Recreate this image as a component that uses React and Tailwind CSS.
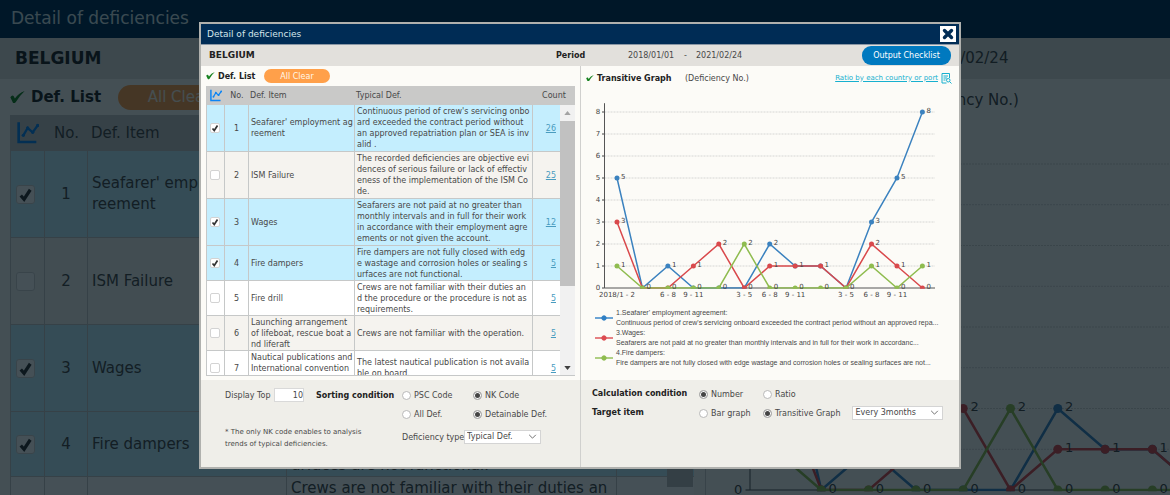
import React, { useState } from "react";
import clsx from "clsx";

const DEFICIENCIES = [
  { no: 1, item: "Seafarer' employment ag\nreement", typical: "Continuous period of crew's servicing onbo\nard exceeded the contract period without\nan approved repatriation plan or SEA is inv\nalid .", count: 26, tall: true },
  { no: 2, item: "ISM Failure", typical: "The recorded deficiencies are objective evi\ndences of serious failure or lack of effectiv\neness of the implementation of the ISM Co\nde.", count: 25, tall: true },
  { no: 3, item: "Wages", typical: "Seafarers are not paid at no greater than\nmonthly intervals and in full for their work\nin accordance with their employment agre\nements or not given the account.", count: 12, tall: true },
  { no: 4, item: "Fire dampers", typical: "Fire dampers are not fully closed with edg\ne wastage and corrosion holes or sealing s\nurfaces are not functional.", count: 5 },
  { no: 5, item: "Fire drill", typical: "Crews are not familiar with their duties an\nd the procedure or the procedure is not as\nrequirements.", count: 5 },
  { no: 6, item: "Launching arrangement\nof lifeboat, rescue boat a\nnd liferaft", typical: "Crews are not familiar with the operation.", count: 5 },
  { no: 7, item: "Nautical publications and\nInternational convention\ns", typical: "The latest nautical publication is not availa\nble on board.", count: 5 },
];

const SERIES = [
  { color: "#3b82bf", values: [5, 0, 1, 0, 0, 0, 2, 1, 1, 0, 3, 5, 8] },
  { color: "#d9494c", values: [3, 0, 0, 1, 2, 0, 1, 1, 1, 0, 2, 1, 0] },
  { color: "#8fbc4f", values: [1, 0, 0, 0, 0, 2, 0, 0, 0, 0, 1, 0, 1] },
];

const X_LABELS = { 0: "2018/1 - 2", 2: "6 - 8", 3: "9 - 11", 5: "3 - 5", 6: "6 - 8", 7: "9 - 11", 9: "3 - 5", 10: "6 - 8", 11: "9 - 11" };

const LEGEND = [
  { title: "1.Seafarer' employment agreement:", text: "Continuous period of crew's servicing onboard exceeded the contract period without an approved repa...", color: "#2f7fc4" },
  { title: "3.Wages:", text: "Seafarers are not paid at no greater than monthly intervals and in full for their work in accordanc...", color: "#dc4b50" },
  { title: "4.Fire dampers:", text: "Fire dampers are not fully closed with edge wastage and corrosion holes or sealing surfaces are not...", color: "#8fbc4f" },
];

// the dialog itself and the enlarged copy behind it
const SMALL = {
  text: "text-[8px] leading-[11px]",
  head: "h-[19px]",
  tall: "h-[47px]",
  short: "h-[35px]",
  cols: ["w-[18px]", "w-[24px]", "w-[106px]", "w-[178px]", "w-[42px]"],
  icon: "w-[12px] h-[13px]",
  box: "w-[10px] h-[10px] rounded-[2px]",
  boxPad: "pr-[1px]",
  pad: "px-[2px]",
  headPad: "px-[1px]",
  countPad: "pr-[19px]",
};
const LARGE = {
  text: "text-[15px] leading-[21px]",
  head: "h-[36px]",
  tall: "h-[87px]",
  short: "h-[65px]",
  cols: ["w-[34px]", "w-[43px]", "w-[199px]", "w-[330px]", "w-[77px]"],
  icon: "w-[22px] h-[22px]",
  box: "w-[19px] h-[19px] rounded-[3px]",
  boxPad: "pr-[4px]",
  pad: "px-[4px]",
  headPad: "px-[3px]",
  countPad: "pr-[35px]",
};

const GraphIcon = ({ className }) => (
  <svg viewBox="0 0 66 66" className={className} fill="none" stroke="#0b84f5" strokeWidth="8">
    <path d="M5 1V60H58" />
    <path d="M19 40L32 18L47 31L63 9" strokeWidth="7" />
    <g fill="#0b84f5" stroke="none">
      <circle cx="19" cy="40" r="5" />
      <circle cx="32" cy="18" r="5" />
      <circle cx="47" cy="31" r="5" />
      <circle cx="62" cy="10" r="5" />
    </g>
  </svg>
);

const GreenCheck = ({ className }) => (
  <svg viewBox="0 0 46 38" className={className} fill="#16811f">
    <path d="M1 19Q6 12 11 15L15 23Q26 7 45 0Q28 16 18 34Q13 40 9 36Z" />
  </svg>
);

const TickBox = ({ label, checked, onChange, size }) => (
  <span className={clsx("relative mx-auto block", size)}>
    <input
      type="checkbox"
      aria-label={label}
      checked={checked}
      onChange={onChange}
      className="peer block h-full w-full appearance-none rounded-[inherit] border border-[#d3d3d3] bg-white"
    />
    <svg viewBox="0 0 20 20" className="pointer-events-none absolute inset-0 hidden h-full w-full peer-checked:block" fill="none" stroke="#333" strokeWidth="3.4">
      <path d="M5 11L8.500 15L15 5" />
    </svg>
  </span>
);

const Radio = ({ name, label, checked, className }) => (
  <label className={clsx("flex items-center gap-[3px]", className)}>
    <input
      type="radio"
      name={name}
      defaultChecked={checked}
      className="h-[9px] w-[9px] shrink-0 appearance-none rounded-full border border-[#b9b9b9] bg-white checked:bg-[#444] checked:shadow-[inset_0_0_0_1px_white]"
    />
    {label}
  </label>
);

const Dropdown = ({ id, value, className }) => (
  <span className={clsx("relative block h-[14px]", className)}>
    <select id={id} aria-label={id} className="block h-full w-full appearance-none border border-[#d4d4d4] bg-white pl-[2px] text-[8px] leading-[12px]">
      <option>{value}</option>
    </select>
    <svg viewBox="0 0 10 6" className="pointer-events-none absolute top-[4px] right-[4px] h-[5px] w-[9px]" fill="none" stroke="#555">
      <path d="M1 1L5 5L9 1" />
    </svg>
  </span>
);

function DefTable({ s, rows, selected, toggle }) {
  const cell = "border-r border-b border-[#c6c8c8]";
  return (
    <table className={clsx("w-full table-fixed border-separate border-spacing-0 text-left text-[#484848]", s.text)}>
      <thead className="bg-[#c9c9c8]">
        <tr className={s.head}>
          <th className={clsx("p-0", s.cols[0])}><GraphIcon className={clsx("mx-auto block", s.icon)} /></th>
          <th className={clsx("p-0 text-center font-normal", s.cols[1])}>No.</th>
          <th className={clsx("font-normal", s.cols[2], s.headPad)}>Def. Item</th>
          <th className={clsx("font-normal", s.cols[3], s.headPad)}>Typical Def.</th>
          <th className={clsx("p-0 text-center font-normal", s.cols[4])}>Count</th>
        </tr>
      </thead>
      <tbody>
        {rows.map((d, i) => (
          <tr
            key={d.no}
            className={clsx(d.tall ? s.tall : s.short, selected.includes(d.no) ? "bg-[#c4eefe]" : i % 2 ? "bg-[#f5f3ef]" : "bg-white")}
          >
            <td className={clsx(cell, s.boxPad)}>
              <TickBox label={`Select ${d.item}`} checked={selected.includes(d.no)} onChange={() => toggle(d.no)} size={s.box} />
            </td>
            <td className={clsx(cell, "text-center")}>{d.no}</td>
            <td className={clsx(cell, "whitespace-pre", s.pad)}>{d.item}</td>
            <td className={clsx(cell, "whitespace-pre", s.pad)}>{d.typical}</td>
            <td className={clsx("border-b border-[#c6c8c8] text-right", s.countPad)}>
              <a href="#count" className="text-[#4a9cbf] underline">{d.count}</a>
            </td>
          </tr>
        ))}
      </tbody>
    </table>
  );
}

// x0: axis, x1: first point, step: gap between points, base: y of zero, unit: height of 1
function Chart({ x0, x1, step, base, unit, end, font, dot, stroke, className, ...rest }) {
  const px = (i) => x1 + i * step;
  const py = (v) => base - v * unit;
  const labels = new Set(SERIES.flatMap((l) => l.values.map((v, i) => `${i}:${v}`)));
  return (
    <svg className={className} fontFamily="DejaVu Sans, Verdana, sans-serif" fontSize={font} fill="#444" {...rest}>
      <defs>
        <clipPath id={`plot-${font}`}>
          <rect x={x0} y="0" width={end - x0 + dot} height={base + stroke / 2} />
        </clipPath>
      </defs>
      {[0, 1, 2, 3, 4, 5, 6, 7, 8].map((v) => (
        <g key={v}>
          {v > 0 && <line x1={x0} x2={end} y1={py(v)} y2={py(v)} stroke="#d6d6d4" strokeDasharray="2 1" />}
          <line x1={x0 - dot} x2={x0} y1={py(v)} y2={py(v)} stroke="#444" />
          <text x={x0 - font * 0.6} y={py(v) + font * 0.3} textAnchor="end">{v}</text>
        </g>
      ))}
      <path d={`M${x0} ${py(8.4)}V${base}H${end}`} fill="none" stroke="#555" />
      <g clipPath={`url(#plot-${font})`}>
        {SERIES.map((l) => (
          <g key={l.color} fill={l.color}>
            <polyline points={l.values.map((v, i) => `${px(i)},${py(v)}`).join(" ")} fill="none" stroke={l.color} strokeWidth={stroke} />
            {l.values.map((v, i) => <circle key={i} cx={px(i)} cy={py(v)} r={dot} />)}
          </g>
        ))}
      </g>
      {[...labels].map((key) => {
        const [i, v] = key.split(":").map(Number);
        return <text key={key} x={px(i) + dot * 1.6} y={py(v) + font * 0.2}>{v}</text>;
      })}
      {Object.entries(X_LABELS).map(([i, t]) => (
        <text key={i} x={px(Number(i))} y={base + font * 1.25} textAnchor="middle">{t}</text>
      ))}
    </svg>
  );
}

function PageBehind({ selected, toggle }) {
  return (
    <div inert className="h-full w-full overflow-hidden bg-[#fcfbf7] text-[15px] whitespace-nowrap text-[#444]">
      <header className="flex h-[38px] items-center bg-[#002c55] pl-[11px] text-[17px] text-[#d5e6ea]">Detail of deficiencies</header>
      <div className="flex h-[41px] items-center bg-[#e2e0dc] pl-[15px]">
        <b className="w-[645px] shrink-0 text-[17px] text-[#222]">BELGIUM</b>
        <b className="w-[134px] shrink-0">Period</b>
        <span className="w-[104px] shrink-0">2018/01/01</span>
        <span className="w-[24px] shrink-0">-</span>
        <span>2021/02/24</span>
      </div>
      <div className="flex">
        <section className="w-[706px] shrink-0 border-r border-[#d0d0ce] pr-[11px] pl-[10px]">
          <div className="flex h-[36px] items-center">
            <GreenCheck className="mr-[6px] w-[15px]" />
            <b className="w-[87px] text-[#222]">Def. List</b>
            <button className="h-[25px] w-[122px] rounded-full bg-[#ffa04a] text-[#fff6e8]">All Clear</button>
          </div>
          <div className="relative border-x border-[#c6c8c8]">
            <DefTable s={LARGE} rows={DEFICIENCIES.slice(0, 5)} selected={selected} toggle={toggle} />
            <div className="absolute top-[36px] right-0 h-[336px] w-[26px] bg-[#c1c1c1]" />
          </div>
        </section>
        <section className="min-w-0 flex-1 overflow-hidden">
          <div className="flex h-[42px] items-center pl-[8px]">
            <GreenCheck className="mr-[6px] w-[15px]" />
            <b className="w-[164px] text-[#222]">Transitive Graph</b>
            <span>(Deficiency No.)</span>
          </div>
          <Chart
            className="block h-[400px] w-[702px]"
            x0={44} x1={68} step={47.3} base={369} unit={40.75} end={660} font={13} dot={4.5} stroke={2.5}
          />
        </section>
      </div>
    </div>
  );
}

function App() {
  const [selected, setSelected] = useState([1, 3, 4]);
  const toggle = (no) =>
    setSelected((prev) => (prev.includes(no) ? prev.filter((n) => n !== no) : [...prev, no]));

  return (
    <div className="relative h-screen overflow-hidden font-['DejaVu_Sans',Verdana,sans-serif]">
      <PageBehind selected={selected} toggle={toggle} />
      <div className="absolute inset-0 bg-[#000f17]/73 pt-[22px] pr-[209px] pb-[26px] pl-[199px]">
        <div role="dialog" aria-label="Detail of deficiencies" className="flex h-full flex-col border-2 border-[#b0b1ae] bg-[#fcfbf7] text-[8px] leading-[11px] whitespace-nowrap text-[#484848]">
          <header className="flex h-[21px] shrink-0 items-center justify-between border-b border-[#8a97a5] bg-[#002c55] pr-[3px] pl-[6px] text-[9px] text-[#d5e6ea]">
            <h1>Detail of deficiencies</h1>
            <button aria-label="Close" className="h-[16px] w-[16px] bg-white p-[2px]">
              <svg viewBox="0 0 12 12" className="block h-full w-full" stroke="#002c55" strokeWidth="3.4" strokeLinecap="round">
                <path d="M2.500 2.500L9.500 9.500M9.500 2.500L2.500 9.500" />
              </svg>
            </button>
          </header>
          <div className="flex h-[21px] shrink-0 items-center bg-[#e2e0dc] pr-[8px] pl-[8px]">
            <b className="w-[347px] text-[9px] text-[#222]">BELGIUM</b>
            <b className="w-[72px] text-[#222]">Period</b>
            <span className="w-[56px]">2018/01/01</span>
            <span className="w-[12px]">-</span>
            <span>2021/02/24</span>
            <button className="ml-auto h-[19px] w-[89px] rounded-[9px] bg-[#0079bf] text-white">Output Checklist</button>
          </div>
          <div className="grid min-h-0 flex-1 grid-cols-2">
            <section className="flex min-h-0 flex-col">
              <div className="flex h-[20px] shrink-0 items-center pl-[5px]">
                <GreenCheck className="mr-[3px] w-[9px]" />
                <b className="w-[46px] text-[#222]">Def. List</b>
                <button className="h-[14px] w-[66px] rounded-full bg-[#ffa04a] text-[#fff6e8]">All Clear</button>
              </div>
              <div className="relative mr-[5px] ml-[5px] h-[290px] shrink-0 overflow-hidden border-b border-l border-[#c6c8c8]">
                <DefTable s={SMALL} rows={DEFICIENCIES} selected={selected} toggle={toggle} />
                <div className="absolute top-[19px] right-0 bottom-0 flex w-[15px] flex-col items-center justify-between bg-[#f1f1f1] pb-[5px]">
                  <svg viewBox="0 0 8 5" className="mt-[6px] h-[4px] w-[7px]" fill="#a3a3a3"><path d="M0 5L4 0L8 5Z" /></svg>
                  <div className="mt-[6px] mb-auto h-[165px] w-full bg-[#c1c1c1]" />
                  <svg viewBox="0 0 8 5" className="h-[4px] w-[7px]" fill="#404040"><path d="M0 0L4 5L8 0Z" /></svg>
                </div>
              </div>
              <div className="mt-[4px] flex flex-1 bg-[#efeee9] pt-[8px] pl-[24px]">
                <div className="w-[177px]">
                  <div className="flex h-[14px] items-center">
                    <label htmlFor="top" className="w-[49px]">Display Top</label>
                    <input id="top" defaultValue="10" className="h-[14px] w-[30px] border border-[#d9d9d9] bg-white text-right" />
                    <b className="ml-[12px] text-[#222]">Sorting condition</b>
                  </div>
                  <p className="mt-[24px] text-[7px] leading-[12px]">* The only NK code enables to analysis<br />trends of typical deficiencies.</p>
                </div>
                <div>
                  <div className="grid grid-cols-[71px_1fr] gap-y-[5px]">
                    <Radio name="code" label="PSC Code" className="h-[14px]" />
                    <Radio name="code" label="NK Code" checked className="h-[14px]" />
                    <Radio name="def" label="All Def." className="h-[14px]" />
                    <Radio name="def" label="Detainable Def." checked className="h-[14px]" />
                  </div>
                  <div className="mt-[9px] flex items-center">
                    <label htmlFor="type" className="w-[62px]">Deficiency type</label>
                    <Dropdown id="type" value="Typical Def." className="w-[77px]" />
                  </div>
                </div>
              </div>
            </section>
            <section className="flex min-h-0 min-w-0 flex-col border-l border-[#d0d0ce]">
              <div className="flex h-[24px] shrink-0 items-center pr-[7px] pl-[5px]">
                <GreenCheck className="mr-[3px] w-[8px]" />
                <b className="w-[88px] text-[#222]">Transitive Graph</b>
                <span>(Deficiency No.)</span>
                <a href="#ratio" className="ml-auto flex items-center gap-[3px] text-[7px] text-[#17b0cf] underline">
                  Ratio by each country or port
                  <svg viewBox="0 0 22 22" className="h-[11px] w-[11px]" fill="none" stroke="#17b0cf" strokeWidth="2">
                    <path d="M17 10V1H2V20H11M5 6H14M5 10H12M5 14H9" />
                    <circle cx="14.500" cy="14.500" r="3.500" />
                    <path d="M17 17L21 21" />
                  </svg>
                </a>
              </div>
              <Chart
                viewBox="0 0 378 212"
                className="block w-full shrink-0"
                x0={23.5} x1={36} step={25.45} base={198} unit={22} end={354} font={7} dot={2.5} stroke={1.5}
              />
              <ul className="mt-[6px] flex-none pl-[14px] font-['Liberation_Sans',Arial,sans-serif] text-[7px] leading-[10px]">
                {LEGEND.map((l) => (
                  <li key={l.title} className="flex items-center gap-[3px]">
                    <svg viewBox="0 0 18 6" className="h-[6px] w-[18px] shrink-0" fill={l.color} stroke={l.color}>
                      <path d="M0 3H18" strokeWidth="1.4" />
                      <circle cx="9" cy="3" r="2.200" />
                    </svg>
                    <p>{l.title}<br />{l.text}</p>
                  </li>
                ))}
              </ul>
              <div className="mt-[12px] flex-1 bg-[#efeee9] pt-[7px] pl-[11px]">
                <div className="grid grid-cols-[107px_64px_1fr] gap-y-[5px]">
                  <b className="leading-[14px] text-[#222]">Calculation condition</b>
                  <Radio name="calc" label="Number" checked />
                  <Radio name="calc" label="Ratio" />
                  <b className="leading-[14px] text-[#222]">Target item</b>
                  <Radio name="target" label="Bar graph" />
                  <div className="flex items-center gap-[12px]">
                    <Radio name="target" label="Transitive Graph" checked />
                    <Dropdown id="interval" value="Every 3months" className="w-[91px]" />
                  </div>
                </div>
              </div>
            </section>
          </div>
        </div>
      </div>
    </div>
  );
}

export default App;
